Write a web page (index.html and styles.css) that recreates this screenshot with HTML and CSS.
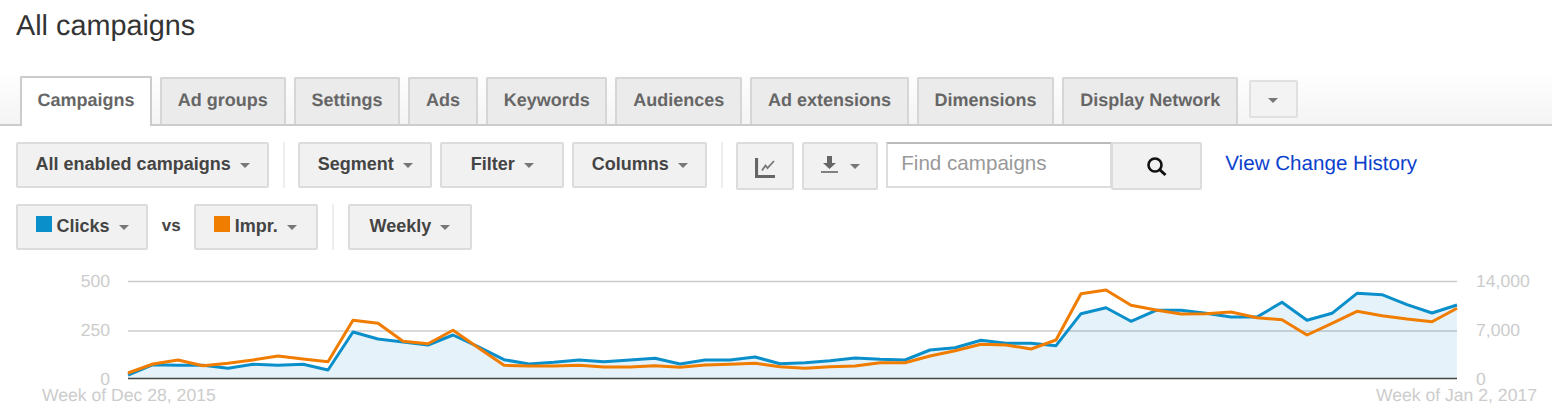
FILE: index.html
```html
<!DOCTYPE html>
<html lang="en">
<head>
  <meta charset="UTF-8">
  <title>All campaigns</title>
  <link rel="stylesheet" href="styles.css">
</head>
<body>
  <h1 class="title">All campaigns</h1>

  <nav class="tabs">
    <a class="tab active">Campaigns</a>
    <a class="tab">Ad groups</a>
    <a class="tab">Settings</a>
    <a class="tab">Ads</a>
    <a class="tab">Keywords</a>
    <a class="tab">Audiences</a>
    <a class="tab">Ad extensions</a>
    <a class="tab">Dimensions</a>
    <a class="tab">Display Network</a>
    <button class="more"><span class="caret"></span></button>
  </nav>

  <div class="toolbar">
    <div class="row">
      <button class="btn">All enabled campaigns <span class="caret"></span></button>
      <span class="sep"></span>
      <button class="btn">Segment <span class="caret"></span></button>
      <button class="btn filter">Filter <span class="caret"></span></button>
      <button class="btn">Columns <span class="caret"></span></button>
      <span class="sep"></span>
      <button class="btn icon-btn chart-btn">
        <svg width="20" height="20" viewBox="0 0 20 20">
          <path d="M1.5 0V18.5H20" fill="none" stroke="#666" stroke-width="3.2"/>
          <path d="M7 12.5L10.5 7.5L12.5 10L19 3" fill="none" stroke="#777" stroke-width="1.8"/>
        </svg>
      </button>
      <button class="btn icon-btn download-btn">
        <svg width="18" height="18" viewBox="0 0 18 18">
          <path d="M6 0H11V7H15L8.5 13L2 7H6Z" fill="#666"/>
          <path d="M0 16H17" stroke="#666" stroke-width="1.6"/>
        </svg>
        <span class="caret"></span>
      </button>
      <div class="search">
        <input class="search-input" type="text" placeholder="Find campaigns">
        <button class="btn search-btn">
          <svg width="22" height="22" viewBox="0 0 22 22">
            <circle cx="9" cy="9" r="6.5" fill="none" stroke="#111" stroke-width="2.6"/>
            <path d="M13.5 13.5L19.5 19" stroke="#111" stroke-width="3"/>
          </svg>
        </button>
      </div>
      <a class="history">View Change History</a>
    </div>

    <div class="row">
      <button class="btn metric"><span class="swatch blue"></span>Clicks <span class="caret"></span></button>
      <span class="vs">vs</span>
      <button class="btn metric"><span class="swatch orange"></span>Impr. <span class="caret"></span></button>
      <span class="sep"></span>
      <button class="btn weekly">Weekly <span class="caret"></span></button>
    </div>
  </div>

  <svg class="chart" width="1552" height="160" viewBox="0 260 1552 160">
    <line class="grid" x1="128" y1="281.5" x2="1457" y2="281.5"/>
    <line class="grid" x1="128" y1="331" x2="1457" y2="331"/>
    <polygon class="area" points="128,378 128,375 153,364.7 178,365.3 203,365.3 228,368.3 253,364.3 278,365.3 303,364.3 328,370 353,332 378,339 403,342 428,345 453,335 478,346.7 504,359.7 529,364 554,362.3 579,360 604,361.7 630,360 655,358.3 680,364 705,360 730,360 755,357 780,363.7 805,362.7 830,360.7 855,358 880,359.3 905,360 930,350 955,347.7 981,340.3 1006,343.3 1031,343.3 1056,345.7 1081,313.7 1106,307.7 1131,321.3 1156,310.3 1181,310.3 1206,313.3 1231,317 1257,317 1282,302.3 1307,320.3 1332,313.3 1357,293.3 1382,294.7 1407,304.7 1432,313 1457,305 1457,378"/>
    <line class="base" x1="128" y1="378.5" x2="1457" y2="378.5"/>
    <polyline class="line-blue" points="128,375 153,364.7 178,365.3 203,365.3 228,368.3 253,364.3 278,365.3 303,364.3 328,370 353,332 378,339 403,342 428,345 453,335 478,346.7 504,359.7 529,364 554,362.3 579,360 604,361.7 630,360 655,358.3 680,364 705,360 730,360 755,357 780,363.7 805,362.7 830,360.7 855,358 880,359.3 905,360 930,350 955,347.7 981,340.3 1006,343.3 1031,343.3 1056,345.7 1081,313.7 1106,307.7 1131,321.3 1156,310.3 1181,310.3 1206,313.3 1231,317 1257,317 1282,302.3 1307,320.3 1332,313.3 1357,293.3 1382,294.7 1407,304.7 1432,313 1457,305"/>
    <polyline class="line-orange" points="128,373 153,364 178,360 203,365.7 228,363.3 253,360 278,356 303,359 328,361.7 353,320.3 378,323.3 403,341.3 428,343.7 453,330.3 479,348.3 504,365.3 529,366 554,366 579,365.3 604,367 630,367 655,365.7 680,367.3 705,365 730,364.3 755,363.3 780,366.7 805,368.3 830,366.7 855,366 880,362.7 905,362.7 930,356 955,350.7 981,344.3 1006,345 1031,349 1056,340 1081,293.7 1106,290 1131,305.3 1156,310 1181,314 1206,313.7 1231,312 1257,317.7 1282,319.7 1307,335 1332,323.3 1357,311.3 1382,315.7 1407,319 1432,321.7 1457,308.3"/>
    <text class="axis" x="110" y="287" text-anchor="end">500</text>
    <text class="axis" x="110" y="336" text-anchor="end">250</text>
    <text class="axis" x="110" y="385" text-anchor="end">0</text>
    <text class="axis" x="1476" y="287">14,000</text>
    <text class="axis" x="1476" y="336">7,000</text>
    <text class="axis" x="1476" y="385">0</text>
    <text class="axis" x="42" y="401">Week of Dec 28, 2015</text>
    <text class="axis" x="1537" y="401" text-anchor="end">Week of Jan 2, 2017</text>
  </svg>
</body>
</html>
```

FILE: styles.css
```css
body {
  margin: 0;
  font-family: "Liberation Sans", Arial, sans-serif;
  background-color: white;
  overflow: hidden;
  text-rendering: geometricPrecision;
}
.title {
  margin: 0;
  padding: 10px 16px 0;
  height: 50px;
  font-size: 28.8px;
  line-height: 33px;
  font-weight: normal;
  color: #333;
}
.tabs {
  display: flex;
  align-items: flex-end;
  gap: 8px;
  height: 64px;
  padding-left: 20px;
  background: linear-gradient(#fff 10px, #f4f4f4);
  border-bottom: 2px solid #ccc;
}
.tab {
  box-sizing: border-box;
  height: 47px;
  padding: 0 15.8px;
  line-height: 42px;
  font-size: 18px;
  font-weight: bold;
  color: #666;
  background-color: #ebebeb;
  border: 2px solid #d6d6d6;
  border-bottom: none;
  border-radius: 2px 2px 0 0;
}
.tab.active {
  height: 50px;
  margin-bottom: -2px;
  line-height: 45px;
  padding: 0 15.5px;
  background-color: white;
  border-color: #ccc;
}
.more {
  box-sizing: border-box;
  display: flex;
  align-items: center;
  justify-content: center;
  width: 49px;
  height: 38px;
  margin: 0 0 6px 3px;
  padding: 0;
  background-color: #f3f3f3;
  border: 2px solid #e0e0e0;
  border-radius: 2px;
}
.toolbar {
  display: flex;
  flex-direction: column;
  gap: 16px;
  padding: 16px 0 0 16px;
}
.row {
  display: flex;
  align-items: flex-start;
  gap: 8px;
  height: 46px;
}
.btn {
  box-sizing: border-box;
  display: flex;
  align-items: center;
  justify-content: center;
  gap: 9px;
  height: 46px;
  padding: 0 17.6px 2px;
  font-family: inherit;
  font-size: 18px;
  font-weight: bold;
  color: #444;
  background-color: #f1f1f1;
  border: 2px solid #dcdcdc;
  border-radius: 2px;
  white-space: nowrap;
}
.caret {
  display: inline-block;
  width: 0;
  height: 0;
  margin-top: 2px;
  border-left: 5px solid transparent;
  border-right: 5px solid transparent;
  border-top: 5px solid #777;
}
.filter {
  width: 124px;
}
.weekly {
  width: 124px;
  margin-left: 1px;
}
.sep {
  width: 2px;
  height: 46px;
  margin: 0 5.4px;
  background-color: #eee;
}
.icon-btn {
  height: 48px;
  padding: 0 0 2px;
}
.chart-btn {
  width: 58px;
  padding: 4px 0 0;
}
.download-btn {
  width: 76px;
  gap: 11px;
}
.search {
  display: flex;
}
.search-input {
  box-sizing: border-box;
  width: 226px;
  height: 46px;
  padding: 0 13px 4px;
  font-family: inherit;
  font-size: 20.6px;
  background-color: white;
  border: 2px solid #ddd;
  border-top-color: #bbb;
  outline: none;
}
.search-input::placeholder {
  color: #999;
  opacity: 1;
}
.search-btn {
  width: 91px;
  height: 48px;
  margin-left: -1px;
  padding: 2px 0 0;
}
.history {
  margin-left: 15px;
  font-size: 20.6px;
  line-height: 43px;
  color: #0b41cd;
}
.metric {
  min-width: 124px;
  gap: 5px;
  justify-content: flex-start;
}
.metric .caret {
  margin-left: 4px;
}
.swatch {
  width: 16px;
  height: 16px;
  margin-top: -4px;
}
.swatch.blue {
  background-color: #0a8fcb;
}
.swatch.orange {
  background-color: #f07c00;
}
.vs {
  margin: 0 5.5px;
  font-size: 17px;
  font-weight: bold;
  line-height: 44px;
  color: #444;
}
.chart {
  display: block;
  margin-top: 10px;
}
.grid {
  stroke: #ccc;
  stroke-width: 1.5;
}
.base {
  stroke: #444;
  stroke-width: 1.5;
}
.area {
  fill: rgba(10, 130, 200, 0.1);
}
.line-blue,
.line-orange {
  fill: none;
  stroke-width: 3;
  stroke-linejoin: round;
}
.line-blue {
  stroke: #0a8fcb;
}
.line-orange {
  stroke: #f07c00;
}
.axis {
  font-size: 17.6px;
  fill: #ccc;
}
```
